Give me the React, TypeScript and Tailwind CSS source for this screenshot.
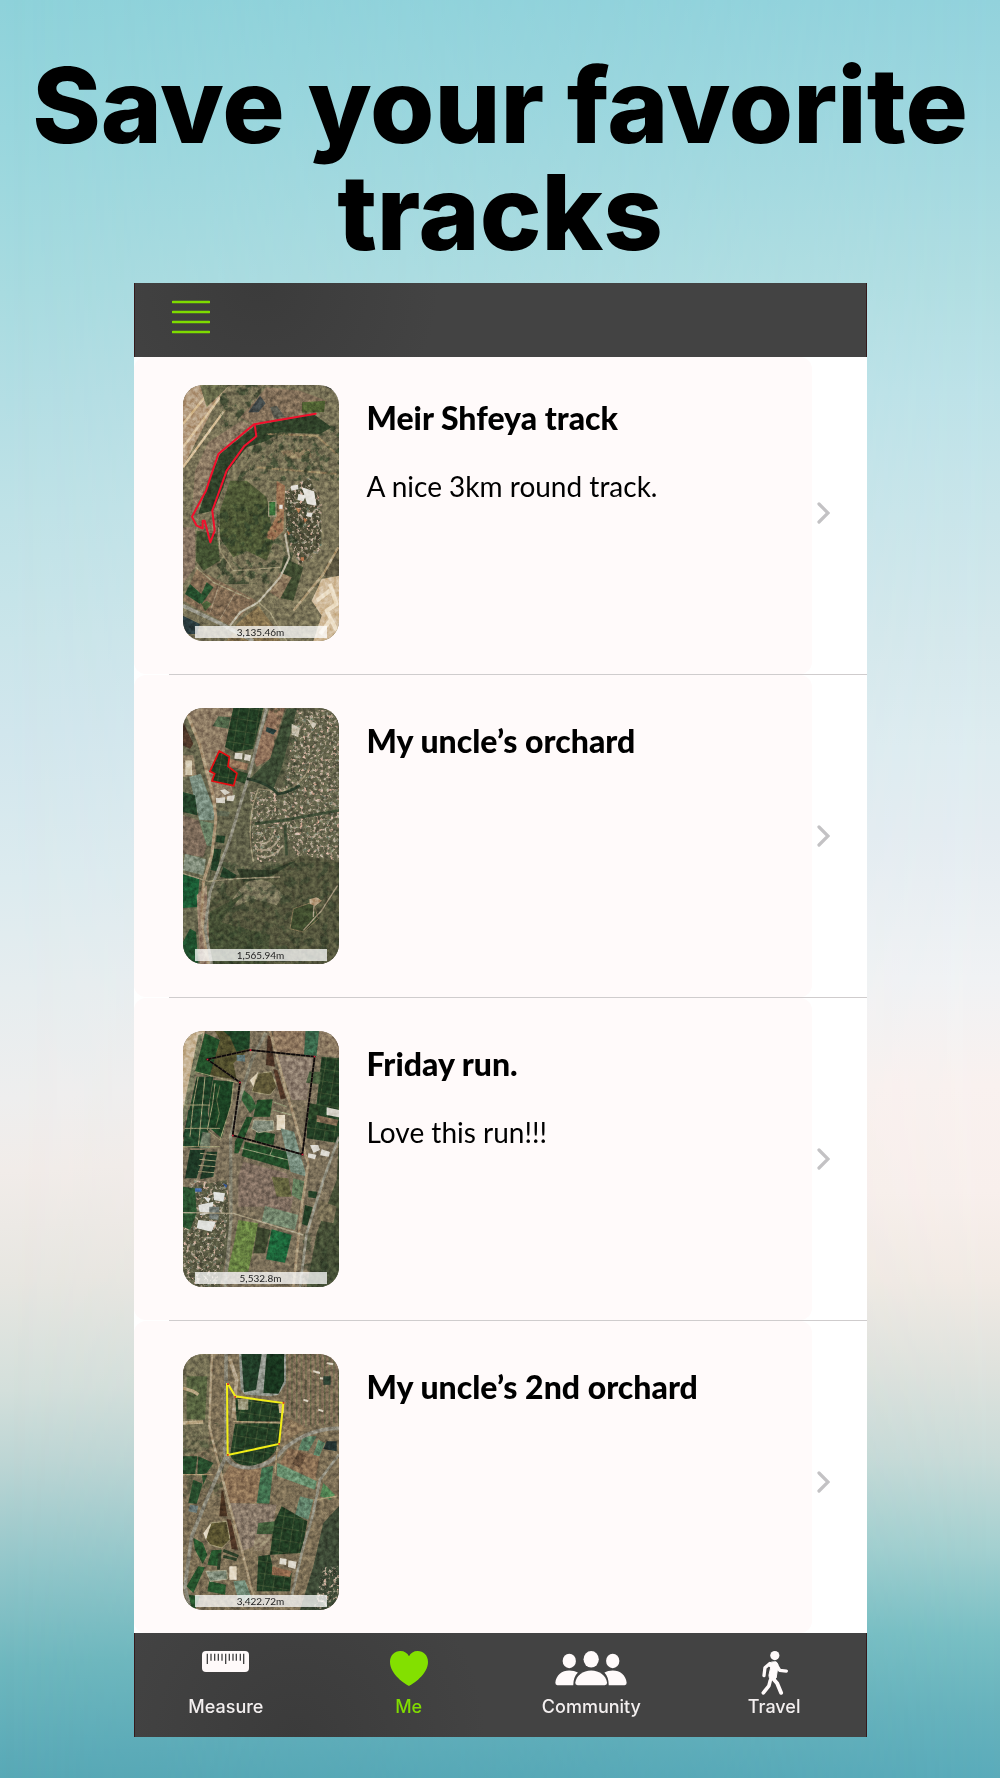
import { ReactNode } from "react";

const Defs = () => (
  <svg className="absolute size-0" aria-hidden="true">
    <defs>
      <filter id="grain" x="0" y="0" width="100%" height="100%" colorInterpolationFilters="sRGB">
        <feTurbulence type="fractalNoise" baseFrequency="0.08" numOctaves="4" seed="4" />
        <feColorMatrix values="1.4 0 0 0 -0.14  1.4 0 0 0 -0.14  1.4 0 0 0 -0.16  0 0 0 0 1" />
      </filter>
      <filter id="bush" x="0" y="0" width="100%" height="100%" colorInterpolationFilters="sRGB">
        <feTurbulence type="fractalNoise" baseFrequency="0.04" numOctaves="4" seed="11" />
        <feColorMatrix result="n" values="0 0 0 0 0.17  0 0 0 0 0.23  0 0 0 0 0.15  0 6 0 0 -3" />
        <feComposite in="n" in2="SourceGraphic" operator="in" />
      </filter>
      <filter id="town" x="0" y="0" width="100%" height="100%" colorInterpolationFilters="sRGB">
        <feTurbulence type="fractalNoise" baseFrequency="0.1" numOctaves="3" seed="7" />
        <feColorMatrix result="n" values="0.9 0 0 0 0.2  0.5 0 0 0 0.34  0.5 0 0 0 0.27  0 6 0 0 -3" />
        <feComposite in="n" in2="SourceGraphic" operator="in" />
      </filter>
      <pattern id="grove" width="30" height="36" patternUnits="userSpaceOnUse" patternTransform="rotate(9)">
        <rect width="30" height="36" fill="#203a22" />
        <path d="M0 0H30M0 0V36" stroke="#55613f" strokeWidth="2.5" />
      </pattern>
      <pattern id="stripes" width="14" height="14" patternUnits="userSpaceOnUse">
        <rect width="14" height="14" fill="#7b6955" />
        <path d="M2 0V14" stroke="#5f6145" strokeWidth="4" />
      </pattern>
    </defs>
  </svg>
);

// Each map is drawn on a 468x768 canvas
const Map = ({ top, base, children, line }: { top: number; base: string; children: ReactNode; line: ReactNode }) => (
  <svg viewBox={`39 ${top} 468 768`} preserveAspectRatio="none" className="block size-full" aria-hidden="true">
    <rect x="39" y={top} width="468" height="768" fill={base} />
    {children}
    <rect x="39" y={top} width="468" height="768" filter="url(#grain)" opacity="0.35" className="mix-blend-overlay" />
    {line}
  </svg>
);

const ShfeyaMap = () => (
  <Map
    top={43}
    base="#736d54"
    line={
      <path
        d="M437 129L252 161L145 250L108 360L66 438L80 465L98 473L98 450L104 450L121 515L134 480L127 420L170 300L222 227L259 197L254 162"
        fill="none" stroke="#f0102c" strokeWidth="6" strokeLinejoin="round" strokeLinecap="round"
      />
    }
  >
    <path d="M39 43H180L140 90L90 190L39 290Z" fill="#b0967a" />
    <path d="M39 160L120 60M39 230L150 80M39 290L170 110" stroke="#d8bf99" strokeWidth="7" fill="none" />
    <path d="M90 43H180L110 110Z" fill="#66684a" />
    <path d="M290 50L390 60L470 90L440 125L250 160L210 140Z" fill="#7c6a56" />
    <path d="M235 125L270 75L287 98L265 125Z" fill="#3f4647" />
    <path d="M300 110L320 105L345 138L312 143Z" fill="#55564d" />
    <path d="M396 95L466 90L462 124L396 126Z" fill="#4b5c30" />
    <path d="M460 43L507 70V43Z" fill="#171b18" />
    <path d="M215 150L250 165L150 250L105 350L66 430L75 300L115 215Z" fill="#85735f" />
    <path d="M39 470H75L75 590L39 640Z" fill="#83705f" />
    <path d="M255 165L430 130L485 170L450 190L330 185L290 210L230 230L175 300L160 350L130 420L85 430L110 350L150 250Z" fill="#2e3f28" />
    <path d="M150 420L180 330L230 330L290 380L300 440L310 510L290 570L230 540L190 560L150 500Z" fill="#4b5534" />
    <path d="M80 480L140 490L150 570L100 600L78 570Z" fill="#404e30" />
    <path d="M330 240L420 235L425 262L350 265Z" fill="#8b7a5d" />
    <path d="M290 190L440 195L500 250M260 290L500 310" stroke="#94805f" strokeWidth="6" fill="none" />
    <path d="M320 330L345 345L340 480L310 510L285 500L318 440Z" fill="#966d50" />
    <path d="M345 370L420 320L450 400L455 520L390 580L350 500Z" fill="#4a4a36" />
    <path d="M345 355L420 320L455 400L455 540L390 590L345 490Z" filter="url(#town)" />
    <path d="M362 345L384 342L386 356L364 360ZM395 350L432 362L440 405L412 400ZM385 370L408 374L400 392L382 388ZM328 402L338 402V414H328ZM410 425L428 428L424 440L408 436Z" fill="#e4e2dc" />
    <path d="M375 410L392 416L386 428ZM400 440L412 448L404 456ZM392 560H402V570H392ZM350 480L362 486L356 494Z" fill="#b4714c" />
    <path d="M340 560L400 590L370 690L320 680Z" fill="#3e4a30" />
    <path d="M507 615L455 625L425 690L455 735L430 811H507Z" fill="#cfb898" />
    <path d="M480 640L500 700L470 720L500 780M440 690L480 660M450 790L480 750" stroke="#ecdec6" strokeWidth="12" fill="none" strokeLinejoin="round" />
    <path d="M507 520L460 615H507Z" fill="#5a5440" />
    <path d="M505 530L460 610L370 720" stroke="#b09c7a" strokeWidth="7" fill="none" />
    <path d="M80 595L260 690L180 765L39 690Z" fill="#7b6650" />
    <path d="M140 400H420L340 640H140ZM150 43H290L240 110L150 200ZM290 150H507V330H200Z" filter="url(#bush)" opacity="0.7" />
    <rect x="296" y="392" width="22" height="44" fill="#376b38" stroke="#9e977d" strokeWidth="4" />
    <path d="M330 605L365 620L330 685L300 665Z" fill="#87725a" />
    <path d="M150 635L120 725M200 660L150 745" stroke="#978670" strokeWidth="3" />
    <path d="M60 640L100 675L90 700L45 670Z" fill="#234a2b" />
    <path d="M110 635L130 650L95 700L85 690Z" fill="#28502f" />
    <path d="M95 700L110 690L125 700L105 722Z" fill="#465c37" />
    <path d="M39 735L90 760L80 790L39 790Z" fill="#26363a" />
    <path d="M200 760L265 705L310 765L330 811H170Z" fill="#806d4c" />
    <path d="M345 490L358 560L330 620L265 695L210 725L180 765" stroke="#bdb6a3" strokeWidth="6" fill="none" />
    <path d="M265 695L300 725L350 811M78 590L130 635L240 685M145 470L150 540L190 600L330 590" stroke="#9b9173" strokeWidth="4" fill="none" />
    <path d="M39 705L150 758L250 811" stroke="#969589" strokeWidth="11" fill="none" />
  </Map>
);

const UncleMap = () => (
  <Map
    top={38}
    base="#63624b"
    line={
      <path
        d="M148 167L178 184L174 213L201 234L191 271L126 257L134 235L120 228Z"
        fill="none" stroke="#e50d12" strokeWidth="5"
      />
    }
  >
    <path d="M39 38H190L165 165L190 300L130 330L70 90Z" fill="#877560" />
    <path d="M39 80L70 145L60 160L39 150Z" fill="#4b3427" />
    <path d="M145 63L182 66L175 100L128 92Z" fill="#4b6045" />
    <path d="M190 38H280L250 160L195 170L165 155Z" fill="url(#grove)" />
    <path d="M148 167L178 184L174 213L201 234L191 271L126 257L134 235L120 228Z" fill="url(#grove)" />
    <path d="M200 225L235 235L225 265L195 255Z" fill="#2b4329" />
    <path d="M178 190L235 205L230 225L180 215Z" fill="#8d6d55" />
    <path d="M345 38H507V500L390 480L250 520L170 490L230 280L310 190Z" fill="#5d5d47" />
    <path d="M350 40H380L340 200L310 280L240 250L300 190Z" fill="#3a4933" />
    <path d="M300 38H345L300 190L260 215L250 190Z" fill="#8a6c57" />
    <path d="M290 95L320 105L310 118L287 108Z" fill="#263d3b" />
    <path d="M380 45H507V495L380 480L340 400L320 500L250 500L240 290L340 270Z" filter="url(#town)" />
    <path d="M365 85L390 98L385 125L365 118ZM410 70L440 85L430 100Z" fill="#c8c0ae" />
    <path d="M250 500Q225 380 265 280L330 290Q400 270 420 210" stroke="#978d72" strokeWidth="4" fill="none" />
    <path d="M255 385L340 375L507 345M345 390L350 480" stroke="#3a4833" strokeWidth="8" fill="none" />
    <path d="M260 480Q300 500 340 450M255 460Q295 478 325 435M265 440Q290 455 310 420" stroke="#a59780" strokeWidth="5" fill="none" />
    <path d="M200 540L300 520L400 480L507 500V806H110L120 620Z" fill="#52533c" />
    <path d="M210 580L250 545L300 560L340 600L320 630L250 610L180 640L130 690Z" fill="#77725a" />
    <path d="M120 650L220 595L150 680L300 720L290 806H110Z" fill="#434c33" />
    <path d="M200 520L300 525L380 495L300 545L220 560Z" fill="#2f3927" />
    <path d="M120 500H507V806H120ZM300 38H380V300H330Z" filter="url(#bush)" opacity="0.5" />
    <path d="M370 640L430 620L445 670L400 710L360 700Z" fill="#3c482c" stroke="#7d7153" strokeWidth="3" />
    <path d="M418 612L440 606L456 616L435 632L420 626Z" fill="#b2987a" />
    <path d="M503 570L455 645L400 705M432 630L430 665" stroke="#a3967e" strokeWidth="4" fill="none" />
    <path d="M39 180H70L80 240L39 245Z" fill="#887760" />
    <rect x="46" y="195" width="20" height="44" fill="#d4c9b1" />
    <path d="M58 245L92 235L135 350L130 375L88 375Z" fill="#73877a" />
    <path d="M39 290L75 300L82 360L39 350Z" fill="#223f28" />
    <path d="M39 360L85 375L110 450L100 485L39 475Z" fill="#766556" />
    <path d="M88 375L133 385L128 455L110 450Z" fill="#657b62" />
    <path d="M45 475L108 492L100 540L39 525Z" fill="#7d8978" />
    <path d="M39 535L88 550L82 635L39 638Z" fill="#195632" />
    <path d="M60 700L78 710L85 806H39V740Z" fill="#1d4b2b" />
    <path d="M140 420L166 422L162 444L138 440ZM132 460L154 462L142 528L122 524ZM160 515L200 540L190 552L150 545Z" fill="#203b25" />
    <path d="M80 600L110 570L120 806H90Z" fill="#917a67" />
    <path d="M195 172L218 174L216 192L193 190ZM224 176L243 180L240 198L222 194ZM150 285L165 281L180 292L165 300ZM172 302L195 300L190 318L170 316ZM138 308L165 306L165 324L138 322Z" fill="#d8d4ca" />
    <path d="M140 345L180 350L175 364L140 360Z" fill="#59604e" />
    <path d="M45 38L90 150L130 300L138 370L125 480L100 560L95 660L115 806" stroke="#a69073" strokeWidth="9" fill="none" />
    <path d="M290 38L240 230L180 430L120 590L105 700L125 806" stroke="#8a887a" strokeWidth="9" fill="none" />
    <path d="M39 535L115 558L200 550L330 545" stroke="#958b71" strokeWidth="4" fill="none" />
    <path d="M230 250Q290 260 325 296Q360 290 390 270" stroke="#263627" strokeWidth="8" fill="none" />
  </Map>
);

const FridayMap = () => (
  <Map
    top={33}
    base="#756a56"
    line={
      <>
        <path d="M112 118L241 90L434 110L397 403L188 346L210 187Z" fill="none" stroke="#54463c" strokeWidth="5" />
        <path d="M112 118L241 90L434 110L397 403L188 346L210 187Z" fill="none" stroke="#0b0808" strokeWidth="5" strokeDasharray="13 2" />
        <path d="M110 116h5v5h-5zM239 88h5v5h-5zM431 107h5v5h-5zM395 401h5v5h-5zM186 344h5v5h-5zM207 185h5v5h-5z" fill="#d4213a" />
      </>
    }
  >
    <path d="M39 33H105L70 160L39 290Z" fill="#c3ae8f" />
    <path d="M85 45L100 40L70 200L39 330V270Z" fill="#74765c" />
    <path d="M105 40L150 60L120 170L75 155Z" fill="#214b28" />
    <path d="M135 33H240L235 90L190 130L200 180L120 165L150 60Z" fill="#4e4b2b" />
    <path d="M160 33H240L238 85L200 95L180 50Z" fill="#1e4226" />
    <path d="M80 170H130L100 355L39 350L60 260Z" fill="#1d3c24" />
    <path d="M130 180L190 185L180 260L155 355L115 320L120 240Z" fill="#1a3f22" />
    <path d="M55 270L110 265L122 320L90 385L39 380Z" fill="#20432a" />
    <path d="M60 390L105 390L80 475H45ZM110 395H142L130 470L90 478Z" fill="#1c3624" />
    <path d="M98 335L122 340L120 385L88 385Z" fill="#6a7562" />
    <path d="M85 170L70 250L60 350M105 170L85 380M39 255H120M45 325H150M39 380H150M75 155L210 190M135 190L128 250L112 330L150 360L185 250L190 190M90 400L140 405M88 418L138 423M86 436L136 440M84 454L132 458" stroke="#99936f" strokeWidth="3" fill="none" />
    <path d="M150 195L140 240L148 280L138 320" stroke="#5f6946" strokeWidth="3" fill="none" />
    <path d="M310 33H405L402 105L310 95Z" fill="#87705a" />
    <path d="M407 33H447L440 108H402Z" fill="#376248" />
    <path d="M450 33H507V110L440 105Z" fill="#87755f" />
    <path d="M320 105L430 115L410 240L365 240Z" fill="#87776a" />
    <path d="M293 45L302 50L315 140L288 135Z" fill="#463023" />
    <path d="M310 148L322 150L348 235L332 238Z" fill="#4d3426" />
    <path d="M245 215L265 160L305 155L320 200L300 225Z" fill="#5a5335" stroke="#978e70" strokeWidth="3" />
    <path d="M240 180L265 155L250 200Z" fill="#ddd0b7" />
    <path d="M200 105L225 105L225 125L200 122Z" fill="#566b6d" />
    <path d="M455 110L507 115V370L410 355L412 305L440 250Z" fill="url(#grove)" />
    <path d="M418 155L455 155L450 192L408 188Z" fill="#43583a" />
    <path d="M418 250L448 255L445 300L412 295Z" fill="#294126" />
    <path d="M470 262L507 270V292L470 285Z" fill="#d6d2c9" />
    <path d="M440 285L505 300L500 318L440 305Z" fill="#7c6650" />
    <path d="M215 205L245 230L260 260L240 280L215 240Z" fill="#315a35" />
    <path d="M262 240L308 238L300 290L250 290ZM230 290L248 292L205 400L193 400L195 365ZM260 332L315 342L310 375L252 365ZM225 365L350 395L358 450L215 408Z" fill="#214927" />
    <path d="M252 300L310 302L312 330L265 338L245 325Z" fill="#7c8677" stroke="#a6a38a" strokeWidth="3" />
    <path d="M320 285H345V330H320Z" fill="#e2d6bf" />
    <path d="M308 245L350 260M310 270L365 285M215 385L355 420M310 380L300 405" stroke="#8b9372" strokeWidth="3" fill="none" />
    <path d="M332 325L372 335L410 470L362 455Z" fill="#72887a" />
    <path d="M220 425L350 460L370 530L360 580L290 560L205 560L205 470Z" fill="#7a695d" />
    <path d="M305 470L355 475L365 530L320 530Z" fill="#5f5f3c" />
    <path d="M370 475L408 485L400 545L365 525Z" fill="#5f7859" />
    <path d="M285 558L385 585L375 630L275 605Z" fill="#6e8069" />
    <path d="M205 600L265 610L235 755L172 755L190 680Z" fill="#637c40" />
    <path d="M262 620L302 630L285 700H250Z" fill="#3a442d" />
    <path d="M305 628L365 645L345 728L288 718Z" fill="#1c6138" />
    <path d="M415 512L442 515L438 535L415 532ZM405 555L428 562L412 618L396 612Z" fill="#213b24" />
    <path d="M420 375L445 375L450 390L430 398ZM455 388L480 396L476 410L450 406ZM415 400L440 404L434 418L414 412Z" fill="#dbd8d0" />
    <path d="M507 350L500 480L440 640L410 801H507Z" fill="#424b34" />
    <path d="M450 540L500 560L490 610L440 600Z" fill="#736a52" />
    <path d="M400 640H507V801H390Z" filter="url(#bush)" opacity="0.5" />
    <path d="M60 500L170 480L180 640L150 801H39V640Z" fill="#53543f" />
    <path d="M60 480L175 490L170 640L140 801H39V650Z" filter="url(#town)" />
    <path d="M85 555L130 545L125 580L90 585ZM130 515L165 520L160 545L132 540ZM85 600L138 605L125 635L80 625ZM100 530L122 535L115 548Z" fill="#dedfdb" />
    <path d="M118 560L148 560L145 600L118 596Z" fill="#6f7672" />
    <path d="M39 500L75 505L80 580L60 630L39 620Z" fill="#29502f" />
    <path d="M75 505H95V515H75ZM158 490L172 495L168 505Z" fill="#4064a0" />
    <path d="M300 33L345 200L395 370L415 430L395 560L370 801" stroke="#a28e72" strokeWidth="8" fill="none" />
    <path d="M287 38L245 120L205 250L182 350L183 600L165 801" stroke="#807d6d" strokeWidth="10" fill="none" />
    <path d="M507 350L460 480L410 640L390 801" stroke="#8c8a7c" strokeWidth="8" fill="none" />
    <path d="M39 578L190 580L250 598L400 645" stroke="#a79c82" strokeWidth="4" fill="none" />
  </Map>
);

const OrchardMap = () => (
  <Map
    top={43}
    base="#776a53"
    line={
      <>
        <path d="M174 133L196 170L340 190L327 313L173 346L171 133Z" fill="none" stroke="#f2ee17" strokeWidth="6" />
        <path d="M171 131h6v5h-6zM193 169h5v5h-5zM338 187h5v5h-5zM325 310h5v5h-5zM171 343h5v5h-5z" fill="#d93224" />
      </>
    }
  >
    <path d="M39 43H120L115 330L39 350Z" fill="#6f6a51" />
    <path d="M39 250H160V470H39Z" filter="url(#bush)" opacity="0.4" />
    <path d="M50 110H112L105 240L50 238Z" fill="#525e3d" />
    <path d="M39 145L70 155L85 165M39 250L100 247" stroke="#b5a17e" strokeWidth="10" fill="none" />
    <path d="M345 43H507V250L400 260L340 200Z" fill="url(#stripes)" />
    <path d="M430 95L450 100M450 115L475 120M400 180L415 185M445 210L460 215M470 70L490 74" stroke="#d8d0bf" strokeWidth="6" />
    <path d="M460 110H482V135H460Z" fill="#293d2f" />
    <path d="M180 60L200 120L190 230L215 240" stroke="#ad9c82" strokeWidth="11" fill="none" />
    <path d="M207 43L212 150L225 165L300 170L325 165L348 130V43" fill="#8a8f87" />
    <path d="M214 43H275L258 150L222 158Z" fill="#1f3a26" />
    <path d="M290 43H342V125L325 162L280 160Z" fill="#18341e" />
    <path d="M196 175L338 192L330 245L200 245Z" fill="url(#grove)" />
    <path d="M203 178H235V210H205Z" fill="#99957a" />
    <path d="M195 252L332 250L325 320Q300 370 240 380Q190 375 180 345Z" fill="url(#grove)" />
    <path d="M325 193H342V220H328Z" fill="#c6ac83" />
    <path d="M345 230L410 265L340 310Z" fill="#857056" />
    <path d="M180 375L285 385L265 490L175 490L160 410Z" fill="#876d53" />
    <path d="M275 385L310 378L298 492L260 490Z" fill="#3e6a4b" />
    <path d="M355 325L450 350L435 420L330 370Z" fill="#846a51" />
    <path d="M385 335L408 350L390 385L368 372Z" fill="#5f4a38" />
    <path d="M322 370L440 425L435 450L320 408Z" fill="#648a6b" />
    <path d="M460 430L495 465L480 480L450 470Z" fill="#4e7d50" />
    <path d="M400 290L440 290L415 335L385 330ZM445 300L465 310L448 350L430 345Z" fill="#557a60" />
    <path d="M470 305L500 305V335L460 328Z" fill="#22302f" />
    <path d="M178 490L320 495L300 600L215 635Z" fill="#837466" />
    <path d="M390 470L430 480L415 540L375 525Z" fill="#5f806a" />
    <path d="M335 500L412 545L395 640L300 645L312 550Z" fill="url(#grove)" />
    <path d="M265 550L315 545L308 583L260 583Z" fill="#3d5737" />
    <path d="M255 585L300 585V630L250 635Z" fill="#8a7c66" />
    <path d="M265 650L300 645L310 690L365 700L360 755H260Z" fill="url(#grove)" />
    <path d="M330 655L350 658L348 676L328 673ZM355 662L380 666L376 688L354 682Z" fill="#dbd6ca" />
    <path d="M307 680L365 695L360 712L305 705Z" fill="#835f47" />
    <path d="M507 500L460 550L430 680L390 811H507Z" fill="#3a4634" />
    <path d="M460 680H507V811H430Z" filter="url(#town)" />
    <path d="M39 350H82L75 405H39ZM85 350L130 370L110 400L82 405ZM70 420L98 432L80 492L55 490ZM95 400L112 405L100 435Z" fill="#25472a" />
    <path d="M60 495L85 498L80 520L55 515Z" fill="#606e6e" />
    <path d="M155 450L160 455L172 530L148 530Z" fill="#443020" />
    <path d="M170 538L182 540L204 630L185 628Z" fill="#493224" />
    <path d="M105 595L120 550L170 545L180 600L155 625L120 615Z" fill="#56502f" stroke="#978e70" strokeWidth="3" />
    <path d="M100 580L125 548L108 600Z" fill="#ddd1ba" />
    <path d="M70 595L98 610L112 645L98 672L75 630ZM125 632L155 630L148 680L112 675ZM85 680L105 683L70 760L50 740ZM118 725L168 735L165 765L112 755ZM55 765L90 770L75 811H45Z" fill="#24502b" />
    <path d="M108 695L170 692L172 718L120 725Z" fill="#7b8777" stroke="#a4a389" strokeWidth="3" />
    <path d="M178 680H200V720H178Z" fill="#e2d7c2" />
    <path d="M190 725L225 722L250 790L205 780Z" fill="#6f8977" />
    <path d="M160 632L205 650M160 650L200 660M150 640L145 690" stroke="#2a3c27" strokeWidth="9" fill="none" />
    <path d="M126 43L118 260L150 390L215 630L255 790" stroke="#a69478" strokeWidth="7" fill="none" />
    <path d="M168 43V350L110 480L65 590L45 740L60 811" stroke="#848174" strokeWidth="11" fill="none" />
    <path d="M165 320Q160 385 240 384Q300 380 345 325Q420 265 507 266" stroke="#8a867a" strokeWidth="11" fill="none" />
    <path d="M507 345L450 420L430 520L395 640L365 770" stroke="#8c897b" strokeWidth="8" fill="none" />
    <path d="M190 245L335 250M322 320L315 400M39 405H130M440 480L500 470" stroke="#a89471" strokeWidth="4" fill="none" />
  </Map>
);

const tracks = [
  { title: "Meir Shfeya track", text: "A nice 3km round track.", distance: "3,135.46m", map: <ShfeyaMap />, pad: "pt-7 pb-[33px]" },
  { title: "My uncle’s orchard", text: "", distance: "1,565.94m", map: <UncleMap />, pad: "py-[33px]" },
  { title: "Friday run.", text: "Love this run!!!", distance: "5,532.8m", map: <FridayMap />, pad: "py-[33px]" },
  { title: "My uncle’s 2nd orchard", text: "", distance: "3,422.72m", map: <OrchardMap />, pad: "pt-[33px] pb-[23px]" },
];

const RulerIcon = () => (
  <svg viewBox="213 93 141 63" className="w-[47px]" aria-hidden="true">
    <rect x="213" y="93" width="141" height="63" rx="12" fill="#fffafa" />
    <path d="M229 101V132M284 101V132M338 101V132M240 101V122M251 101V122M262 101V122M273 101V122M295 101V122M306 101V122M316 101V122M328 101V122" stroke="#444" strokeWidth="4" />
  </svg>
);

const HeartIcon = () => (
  <svg viewBox="777 93 114 105" className="w-[38px]" aria-hidden="true">
    <path d="M834 198C824 193 777 164 777 126C777 106 791 93 808 93C820 93 829 99 834 109C839 99 848 93 860 93C877 93 891 106 891 126C891 164 844 193 834 198Z" fill="#83e000" />
  </svg>
);

const CommunityIcon = () => (
  <svg viewBox="166 94 217 104" className="w-[72px]" fill="#fffafa" aria-hidden="true">
    <ellipse cx="209" cy="124" rx="20" ry="22" />
    <ellipse cx="340" cy="124" rx="20" ry="22" />
    <ellipse cx="275" cy="119" rx="23" ry="25" />
    <path d="M173 197Q167 197 167 190C169 167 187 153 209 153Q224 153 235 159Q221 173 221 197Z" />
    <path d="M376 197Q382 197 382 190C380 167 362 153 340 153Q325 153 315 159Q328 173 328 197Z" />
    <path d="M234 197Q227 197 227 190C230 168 250 153 275 153C300 153 320 168 323 190Q323 197 316 197Z" />
  </svg>
);

const WalkIcon = () => (
  <svg viewBox="782 94 82 134" className="w-[27px]" fill="none" stroke="#fffafa" strokeLinecap="round" strokeLinejoin="round" aria-hidden="true">
    <circle cx="824" cy="108" r="14" fill="#fffafa" stroke="none" />
    <path d="M804 134Q814 124 828 127Q836 133 833 144L828 176Q822 184 808 178L806 168L811 146Z" fill="#fffafa" strokeWidth="3" />
    <path d="M809 132L794 145L791 169" strokeWidth="10" />
    <path d="M830 138L839 153L859 155" strokeWidth="10" />
    <path d="M817 176L831 192L843 221" strokeWidth="12" />
    <path d="M810 184L806 200L789 221" strokeWidth="11" />
  </svg>
);

const tabs = [
  { label: "Measure", icon: <RulerIcon />, color: "text-[#f3efef]" },
  { label: "Me", icon: <HeartIcon />, color: "text-[#80dc00]" },
  { label: "Community", icon: <CommunityIcon />, color: "text-[#f3efef]" },
  { label: "Travel", icon: <WalkIcon />, color: "text-[#f3efef]" },
];

const App = () => {
  return (
    <div className="relative isolate min-h-screen pt-[52px] pb-10 bg-[linear-gradient(177deg,#8ed2da_0%,#98d6dd_7%,#a8dbe0_16%,#b4dee4_22%,#bfe2e7_28%,#cae5ea_35%,#d1e6ed_40%,#dcebef_48%,#e6edef_54%,#eeeeee_60%,#f1ece9_64%,#e7e6e1_70%,#d3dfdb_76%,#bcd5d4_80%,#8fc5c9_86%,#6eb7be_91%,#5cabb8_96%,#50a3b1_100%)]">
      <div className="absolute inset-0 -z-10 mask-r-from-0% mask-r-to-100% rotate-180 bg-[linear-gradient(0deg,#92d2dc_0%,#9fd7df_7%,#b1dee2_16%,#bde2e8_22%,#c9e5ea_29%,#d5e8ec_36%,#deecf0_42%,#e4ecf1_47%,#f0f2f4_55%,#f9f1ef_61%,#f8efec_67%,#f1eae4_72%,#dfe2dd_77%,#c9dbd8_82%,#a4d0d0_87%,#79bfc4_92%,#68b3bd_96%,#5aabba_100%)]" />
      <Defs />
      <h1 className="mb-[17px] text-center font-[Inter,sans-serif] text-[104px] leading-[107px] font-extrabold text-black">
        Save your favorite tracks
      </h1>

      <div className="mx-auto w-[73.3%] bg-white">
        <header className="border-x border-[#351a1c] bg-[#434343] bg-[radial-gradient(circle_at_17%_0%,#3b3b3b,#434343_180px)] pt-4 pb-[22px] pl-[37px]">
          <button type="button" aria-label="Menu" className="block">
            <svg viewBox="0 0 38 36" className="h-9 w-[38px]" aria-hidden="true">
              <path d="M1 3H37M1 13H37M1 23H37M1 33H37" stroke="#7edb00" strokeWidth="2.6" strokeLinecap="round" />
            </svg>
          </button>
        </header>

        <ul className="font-[Lato,sans-serif] text-black">
          {tracks.map((track, index) => (
            <li key={track.title}>
              <a href="#" className="flex">
                <div className={`flex flex-1 gap-7 rounded-xl bg-[#fffafa] pl-[49px] ${track.pad}`}>
                  <div className="relative h-64 w-39 shrink-0 overflow-hidden rounded-[20px]">
                    {track.map}
                    <p className="absolute inset-x-3 bottom-[3px] bg-white/75 text-center text-[10px] leading-3 text-[#222]">
                      {track.distance}
                    </p>
                  </div>
                  <div className="mt-[13px]">
                    <h2 className="text-[32px] leading-10 font-black">{track.title}</h2>
                    {track.text ? <p className="mt-[30px] text-[28px] leading-9">{track.text}</p> : ""}
                  </div>
                </div>
                <div className={`flex w-[55px] items-center pl-[5px] ${track.pad}`}>
                  <svg viewBox="0 0 13 22" className="h-[22px] w-[13px]" aria-hidden="true">
                    <path d="M2 2L11 11L2 20" fill="none" stroke="#c3c2c4" strokeWidth="3.2" strokeLinecap="round" />
                  </svg>
                </div>
              </a>
              {index < tracks.length - 1 ? <div className="ml-[35px] h-px bg-[#cfcccd]" /> : ""}
            </li>
          ))}
        </ul>

        <nav className="grid grid-cols-4 border-x border-[#351a1c] bg-[#434343] bg-[radial-gradient(circle_at_22%_100%,#3b3b3b,#434343_190px)] pt-[18px] pb-[19px] font-[Inter,sans-serif]">
          {tabs.map((tab) => (
            <button key={tab.label} type="button" className={`flex flex-col items-center ${tab.color}`}>
              <span className="h-[45px]">{tab.icon}</span>
              <span className="text-[18px] leading-[22px] font-medium">{tab.label}</span>
            </button>
          ))}
        </nav>
      </div>
    </div>
  );
};

export default App;
